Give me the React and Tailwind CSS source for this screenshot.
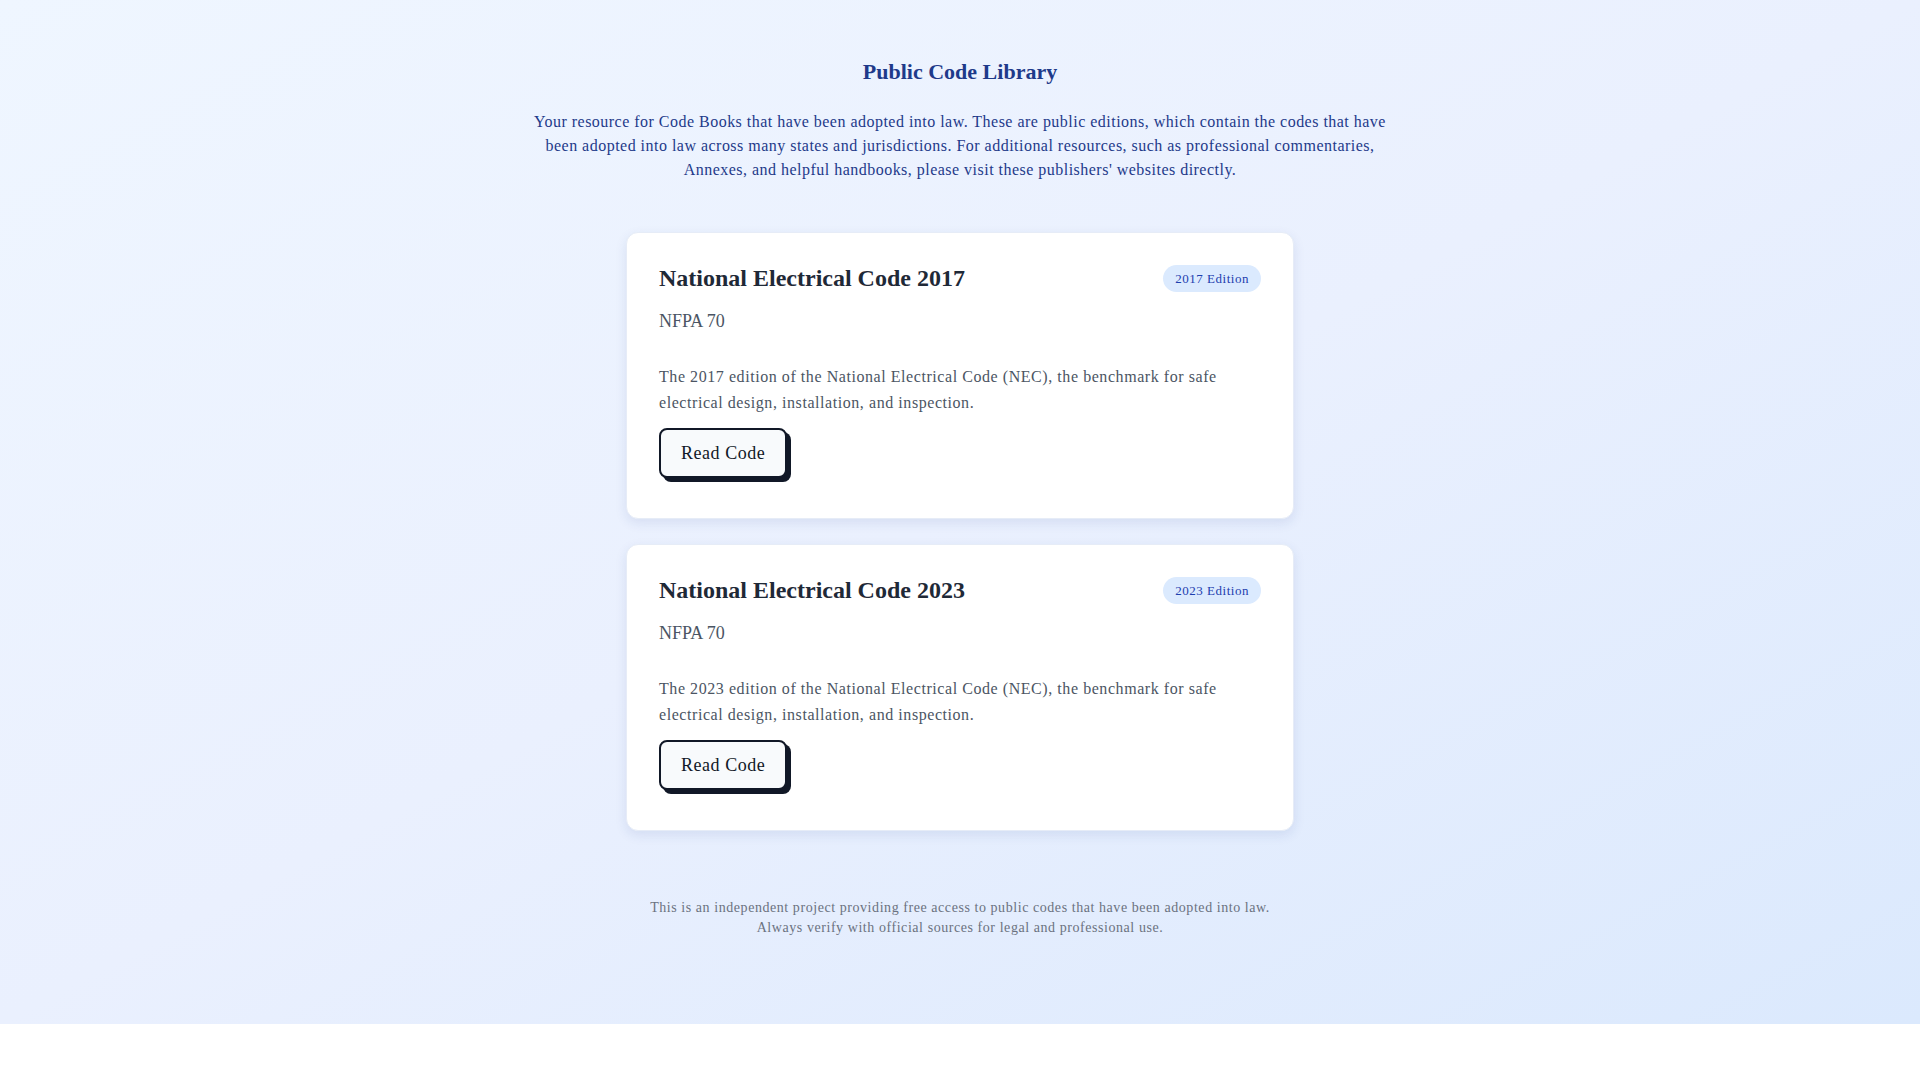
const codes = [
  {
    id: "nec-2017",
    title: "National Electrical Code 2017",
    edition: "2017 Edition",
    number: "NFPA 70",
    blurb:
      "The 2017 edition of the National Electrical Code (NEC), the benchmark for safe electrical design, installation, and inspection.",
  },
  {
    id: "nec-2023",
    title: "National Electrical Code 2023",
    edition: "2023 Edition",
    number: "NFPA 70",
    blurb:
      "The 2023 edition of the National Electrical Code (NEC), the benchmark for safe electrical design, installation, and inspection.",
  },
];

function CodeCard({ code }) {
  return (
    <div className="rounded-xl bg-white px-8 pt-8 pb-10 shadow-[0_4px_12px_rgba(30,58,138,0.10)] border border-[#e6ecf7]">
      <div className="flex items-start justify-between">
        <h2 className="text-2xl leading-[27px] font-bold text-[#1f2937]">{code.title}</h2>
        <span className="rounded-full bg-[#dbeafe] px-3 py-[5px] text-[13px] leading-[17px] tracking-[0.04em] text-[#1e40af]">
          {code.edition}
        </span>
      </div>
      <p className="mt-[15px] text-lg leading-[28px] text-[#4b5563]">{code.number}</p>
      <p className="mt-[29px] text-base leading-[26px] tracking-[0.035em] text-[#4b5563] pr-10">{code.blurb}</p>
      <button className="mt-3 rounded-lg border-2 border-[#111827] bg-[#f8fafc] px-5 py-[9px] text-lg leading-[28px] tracking-[0.03em] text-[#111827] shadow-[4px_4px_0_#111827]">
        Read Code
      </button>
    </div>
  );
}

export default function App() {
  return (
    <div
      className="bg-gradient-to-br from-[#eff6ff] via-[#eaf0fe] to-[#dbe9fd] pt-14 pb-[86px]"
      style={{ fontFamily: '"Liberation Serif", "DejaVu Serif", serif' }}
    >
      <div className="mx-auto max-w-[870px] text-center">
        <h1 className="text-[22px] leading-[32px] font-bold text-[#1e3a8a]">Public Code Library</h1>
        <p className="mt-[22px] text-base leading-[24px] tracking-[0.03em] text-[#1e3a8a]">
          Your resource for Code Books that have been adopted into law. These are public editions, which contain
          the codes that have been adopted into law across many states and jurisdictions. For additional resources,
          such as professional commentaries, Annexes, and helpful handbooks, please visit these publishers' websites
          directly.
        </p>
      </div>

      <div className="mx-auto mt-[50px] flex w-[668px] flex-col gap-[25px]">
        {codes.map((c) => (
          <CodeCard key={c.id} code={c} />
        ))}
      </div>

      <p className="mt-[67px] text-center text-sm leading-[20px] tracking-[0.04em] text-[#6b7280]">
        This is an independent project providing free access to public codes that have been adopted into law.
        <br />
        Always verify with official sources for legal and professional use.
      </p>
    </div>
  );
}
